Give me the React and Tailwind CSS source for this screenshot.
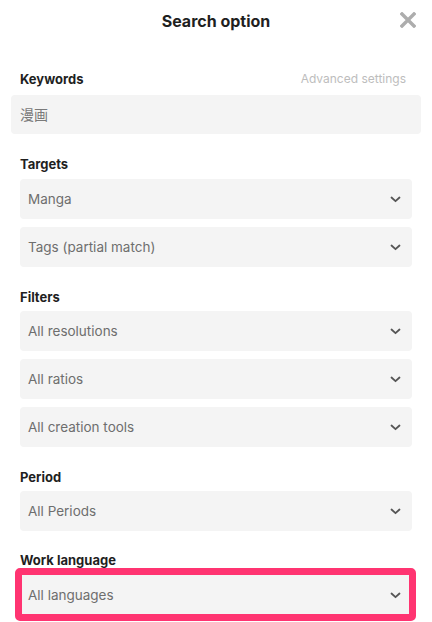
import React from "react";

const Chevron = () => (
  <svg width="11" height="7" viewBox="0 0 11 7" fill="none" className="shrink-0">
    <path d="M1.5 1.5L5.5 5.2L9.5 1.5" stroke="#555" strokeWidth="1.8" strokeLinecap="round" strokeLinejoin="round" />
  </svg>
);

const Select = ({ label }) => (
  <div className="flex h-10 items-center justify-between rounded-[4px] bg-[#f4f4f4] pl-2 pr-[11px]">
    <span className="text-[13.5px] text-[#6e6e6e]">{label}</span>
    <Chevron />
  </div>
);

const Label = ({ children }) => (
  <div className="h-4 text-[13px] font-bold leading-4 text-[#1f1f1f]">{children}</div>
);

export default function App() {
  return (
    <div
      className="h-[622px] w-[432px] overflow-hidden bg-white"
      style={{ fontFamily: 'Inter, "Noto Sans CJK JP", sans-serif' }}
    >
      <div className="relative flex h-[40px] items-center justify-center pt-[1px]">
        <span className="text-[16px] font-bold text-[#1f1f1f]">Search option</span>
        <svg className="absolute right-[16px] top-[12px]" width="16" height="16" viewBox="0 0 16 16">
          <path d="M2 2L14 14M14 2L2 14" stroke="#adadad" strokeWidth="3.4" strokeLinecap="square" />
        </svg>
      </div>

      <div className="px-[20px] pt-[31px]">
        <div className="flex items-center justify-between">
          <Label>Keywords</Label>
          <span className="pr-[6px] text-[12px] leading-4 text-[#bdbdbd]">Advanced settings</span>
        </div>
        <div className="mx-[-9px] mt-[8px] flex h-[39px] items-center rounded-[4px] bg-[#f4f4f4] px-[9px]">
          <span className="text-[14px] text-[#7a7a7a]">漫画</span>
        </div>

        <div className="mt-[22px]">
          <Label>Targets</Label>
          <div className="mt-[7px] flex flex-col gap-2">
            <Select label="Manga" />
            <Select label="Tags (partial match)" />
          </div>
        </div>

        <div className="mt-[22px]">
          <Label>Filters</Label>
          <div className="mt-[6px] flex flex-col gap-2">
            <Select label="All resolutions" />
            <Select label="All ratios" />
            <Select label="All creation tools" />
          </div>
        </div>

        <div className="mt-[22px]">
          <Label>Period</Label>
          <div className="mt-[6px] flex flex-col gap-2">
            <Select label="All Periods" />
          </div>
        </div>

        <div className="mt-[21px]">
          <Label>Work language</Label>
          <div className="relative mt-[7px]">
            <Select label="All languages" />
            <div className="absolute bottom-[-6px] left-[-5px] right-[-4px] top-[-7px] rounded-[5px] border-[7px] border-[#ff3471]" />
          </div>
        </div>
      </div>
    </div>
  );
}
